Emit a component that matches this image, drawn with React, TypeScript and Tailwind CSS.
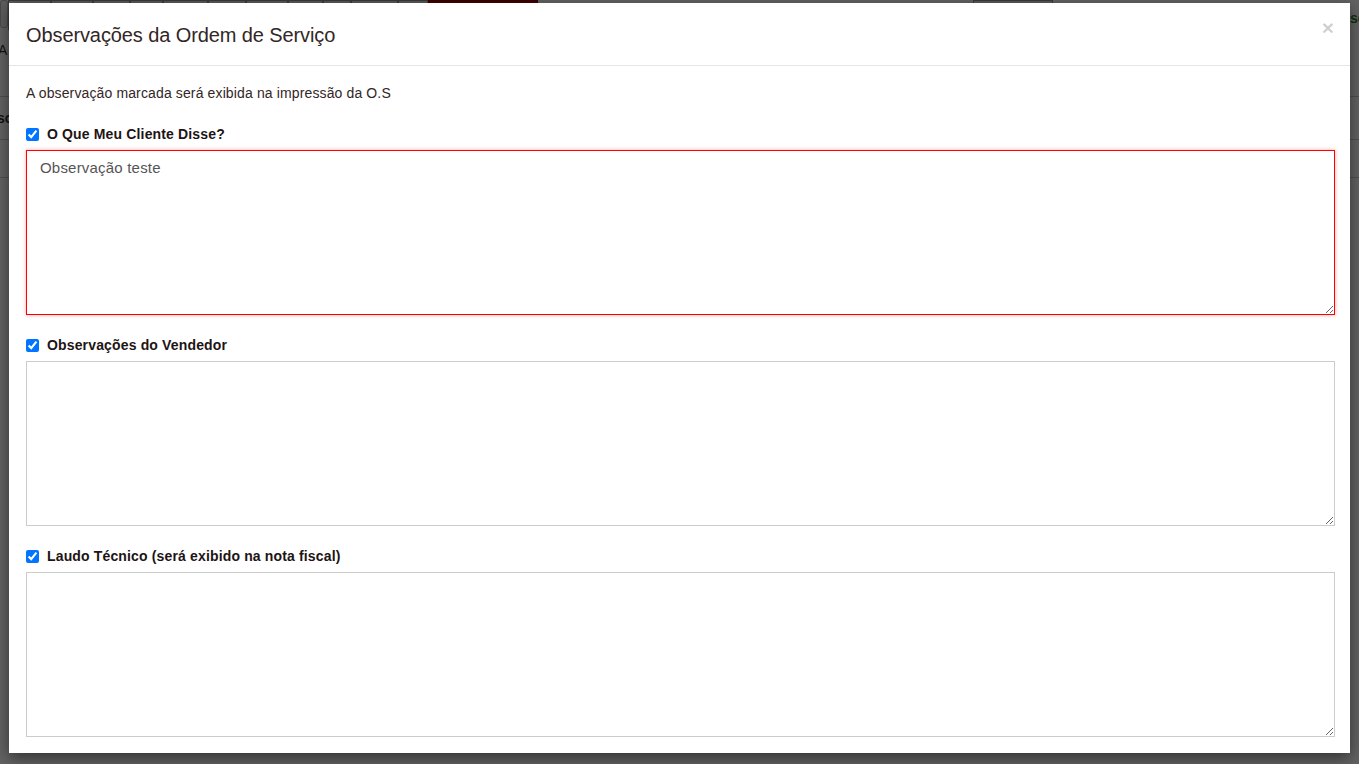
import React from "react";

const font = { fontFamily: '"Liberation Sans", Arial, Helvetica, sans-serif' };

function Field({ label, value, invalid }: { label: string; value?: string; invalid?: boolean }) {
  return (
    <div className="flex flex-col">
      <label className="flex items-center h-[20px] pt-[2px] mb-[7px] gap-[8px] text-[14px] tracking-[0.15px] font-bold text-[#1e1414]">
        <input type="checkbox" defaultChecked className="w-[13px] h-[13px] m-0 shrink-0" />
        <span>{label}</span>
      </label>
      <textarea
        defaultValue={value}
        className={
          "block w-full h-[165px] px-[13px] pt-[7px] pb-[6px] text-[15px] tracking-[0.2px] leading-[20px] text-[#555] bg-white outline-none " +
          (invalid
            ? "border border-[#ff0000] shadow-[0_0_4px_rgba(255,0,0,0.35)]"
            : "border border-[#cccccc]")
        }
        style={font}
      />
    </div>
  );
}

export default function App() {
  const topButtons = [43, 42, 37, 33, 45, 38, 42, 35, 28, 47, 30];
  return (
    <div className="relative w-[1359px] h-[764px] overflow-hidden bg-white" style={font}>
      {/* underlying page */}
      <div className="flex flex-col">
        <div className="flex h-[30px] items-stretch">
          <div className="w-[8px] h-[28px] bg-[#f3f3f3] border border-[#bbb] rounded-[3px]" />
          {topButtons.map((w, i) => (
            <div key={i} style={{ width: w }} className="h-[30px] border border-[#999] bg-[#e8e8e8]" />
          ))}
          <div className="w-[110px] h-[30px] bg-[#b00000] border border-[#800]" />
          <div className="w-[435px]" />
          <div className="w-[80px] h-[30px] border border-[#999] bg-[#e8e8e8]" />
          <div className="flex-1" />
          <div className="w-[9px] text-[14px] font-bold text-[#2a7a2a] pt-[8px]">sc</div>
        </div>
        <div className="h-[40px] flex items-center text-[14px] text-[#333] -ml-[2px]">A</div>
        <div className="h-[27px] border-b border-[#ccc]" />
        <div className="h-[43px] flex items-center text-[14px] font-bold text-[#333] border-b border-[#ccc] -ml-[3px]">sc</div>
        <div className="h-[38px] border-b border-[#ccc]" />
      </div>

      {/* overlay */}
      <div className="absolute inset-0 bg-black/[0.61]" />

      {/* modal */}
      <div className="absolute left-[9px] top-[3px] w-[1341px] h-[750px] bg-white shadow-[0_5px_15px_rgba(0,0,0,0.5)] flex flex-col">
        <div className="h-[63px] border-b border-[#e5e5e5] flex items-start justify-between pl-[17px] pr-[16px] shrink-0">
          <h4 className="mt-[19px] text-[20px] tracking-[-0.1px] leading-[26px] text-[#332626] font-normal">Observações da Ordem de Serviço</h4>
          <button className="mt-[10px] text-[21px] font-bold leading-[30px] text-[#000]/20">×</button>
        </div>
        <div className="pl-[17px] pr-[15px] pt-[17px] flex flex-col">
          <p className="h-[20px] leading-[20px] text-[14px] tracking-[0.13px] text-[#332626] mb-[20px]">
            A observação marcada será exibida na impressão da O.S
          </p>
          <div className="flex flex-col gap-[19px]">
            <Field label="O Que Meu Cliente Disse?" value="Observação teste" invalid />
            <Field label="Observações do Vendedor" />
            <Field label="Laudo Técnico (será exibido na nota fiscal)" />
          </div>
        </div>
      </div>
    </div>
  );
}
